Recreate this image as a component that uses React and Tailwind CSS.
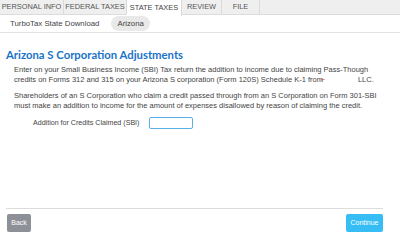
import React from 'react';

const tabs = [
  { label: 'PERSONAL INFO', w: 'w-[64px]' },
  { label: 'FEDERAL TAXES', w: 'w-[63px]' },
  { label: 'STATE TAXES', w: 'w-[55px]' },
  { label: 'REVIEW', w: 'w-[40px]' },
  { label: 'FILE', w: 'w-[38px]' },
];

export default function App() {
  return (
    <div className="w-[400px] h-[252px] bg-white flex flex-col overflow-hidden font-['Liberation_Sans',Arial,sans-serif] text-[#444]">
      {/* Top tabs */}
      <div className="flex h-[15px] bg-[#efefef] border-b border-[#dcdcdc]">
        {tabs.map(t => (
          <div
            key={t.label}
            className={`${t.w} shrink-0 whitespace-nowrap flex items-center justify-center border-r border-[#dadada] text-[7.4px] leading-none ${
              t.label === 'STATE TAXES' ? 'bg-white h-[16px] text-[#444]' : 'text-[#555]'
            }`}
          >
            {t.label}
          </div>
        ))}
      </div>

      {/* Sub nav */}
      <div className="flex items-center h-[18px] border-b border-[#e2e2e2] pl-[10px] gap-[12px] text-[7.8px] text-[#444] whitespace-nowrap">
        <span>TurboTax State Download</span>
        <span className="bg-[#e9e9e9] rounded-full px-[6px] py-[2px]">Arizona</span>
      </div>

      {/* Content */}
      <div className="flex-1 pl-[6px] pr-[17px] pt-[16px]">
        <h1 className="font-['Lato',sans-serif] font-bold text-[11.3px] leading-none text-[#1a73c8]">
          Arizona S Corporation Adjustments
        </h1>
        <div className="pl-[8px] pr-[6px] pt-[5px] text-[7.5px] leading-[10px] text-[#444]">
          <p>
            Enter on your Small Business Income (SBI) Tax return the addition to income due to claiming Pass-Though
            credits on Forms 312 and 315 on your Arizona S corporation (Form 120S) Schedule K-1 from
            <span className="relative inline-block w-[35px]">
              <span className="absolute left-[-2px] top-[-7px] text-[#e02020] text-[7px]">⌐</span>
            </span>
            LLC.
          </p>
          <p className="mt-[6px]">
            Shareholders of an S Corporation who claim a credit passed through from an S Corporation on Form 301-SBI
            must make an addition to income for the amount of expenses disallowed by reason of claiming the credit.
          </p>
          <div className="flex items-center mt-[6px] pl-[19px] gap-[10px] text-[7.1px]">
            <span>Addition for Credits Claimed (SBI)</span>
            <div className="w-[44px] h-[12px] border border-[#5ab0e6] rounded-[2px] bg-white" />
          </div>
        </div>
      </div>

      {/* Footer */}
      <div className="ml-[6px] mr-[17px] border-t border-[#dcdcdc] h-[44px] pt-[5px] flex justify-between items-start">
        <button className="w-[24px] h-[18px] bg-[#8e9097] rounded-[2px] text-white text-[7px] ml-[1px]">Back</button>
        <button className="w-[37px] h-[18px] bg-[#36bdf4] rounded-[2px] text-white text-[7px]">Continue</button>
      </div>
    </div>
  );
}
